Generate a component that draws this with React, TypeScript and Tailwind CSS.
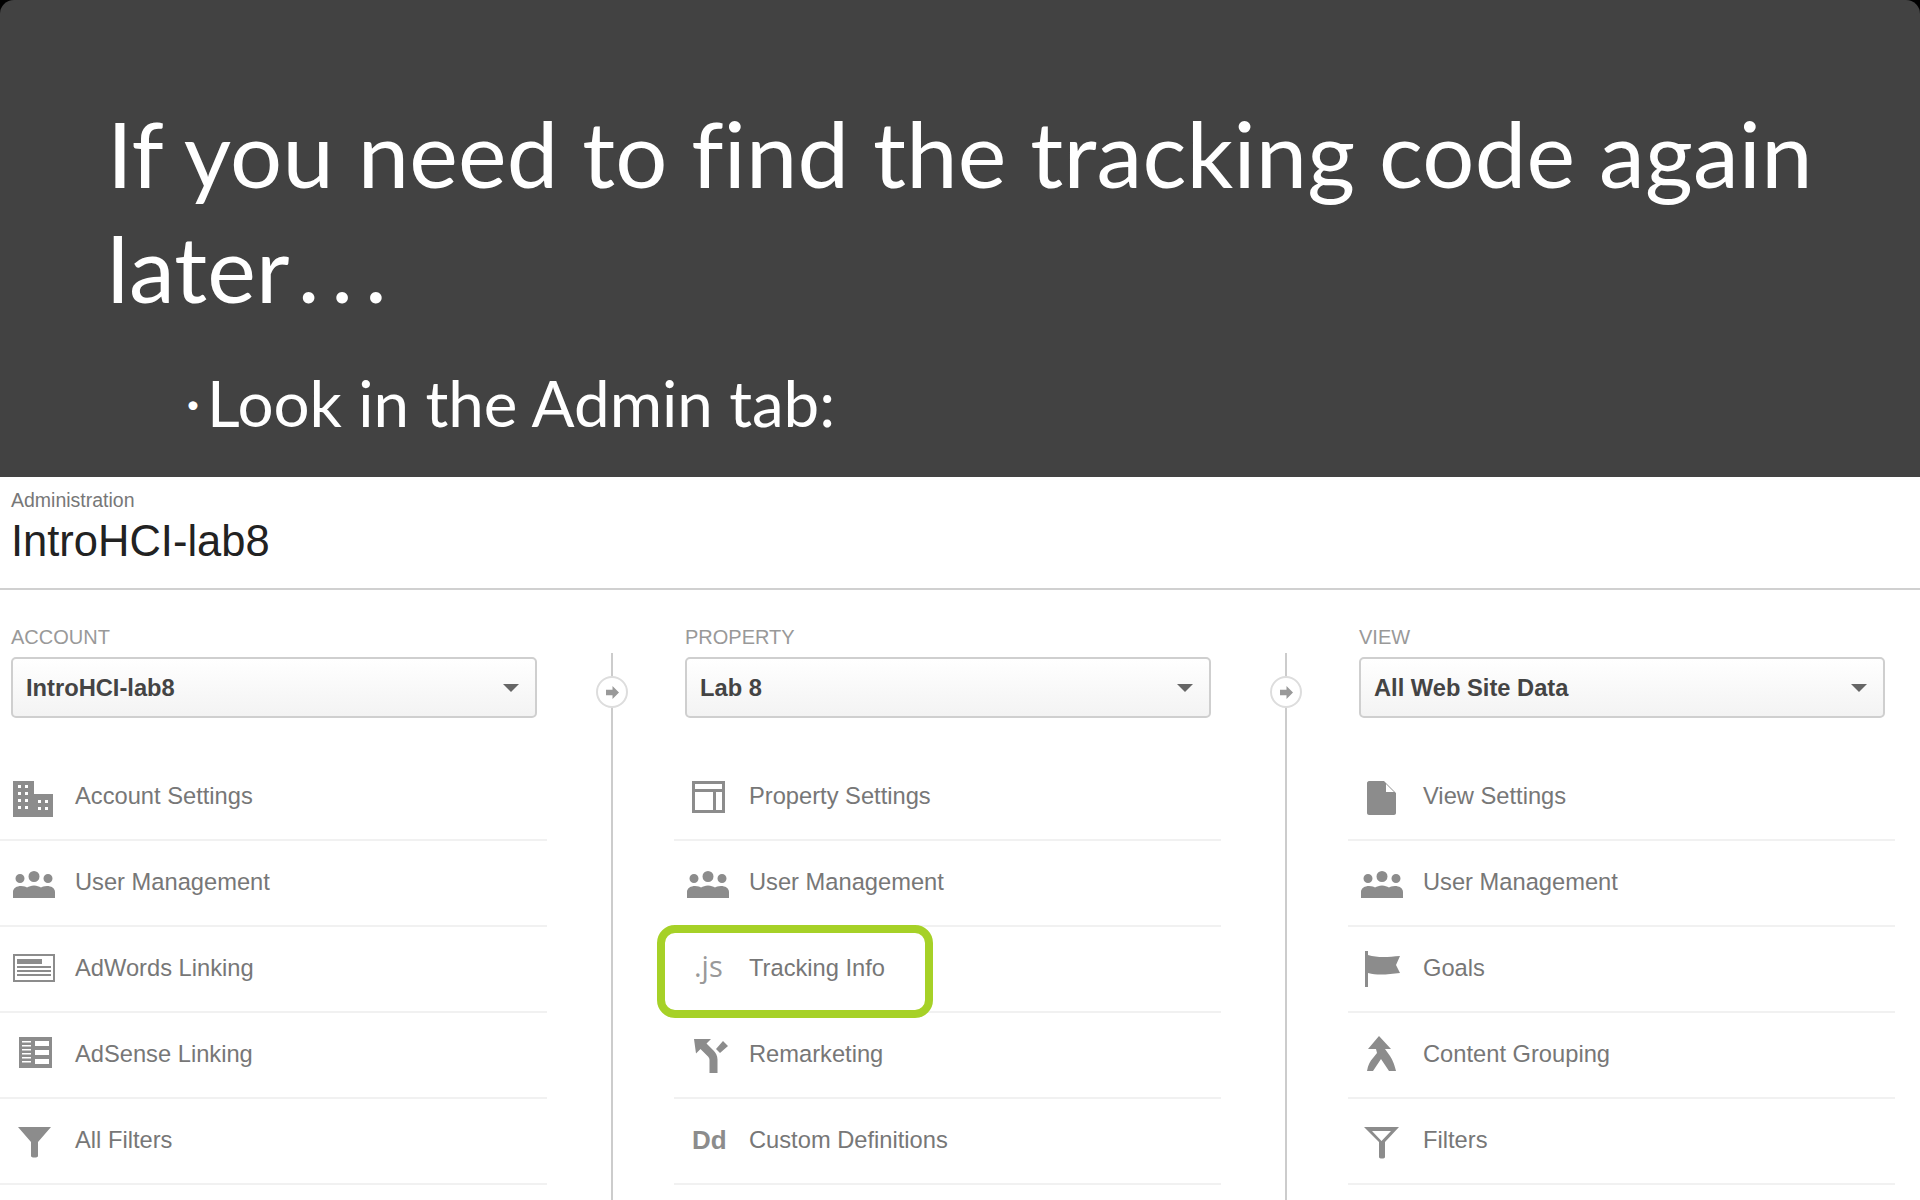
const TITLE_FONT = "font-['Lato',sans-serif]";

function Path({ d, className = '' }: { d: string; className?: string }) {
  return (
    <svg viewBox="0 0 44 44" className={`h-[44px] w-[44px] fill-[#8c8c8c] ${className}`}>
      <path d={d} fillRule="evenodd" />
    </svg>
  );
}

const BUILDING =
  'M2 4h21v13h19v23H2z M7 8v3h3V8z M14 8v3h3V8z M7 15v3h3v-3z M14 15v3h3v-3z M7 22v3h3v-3z M14 22v3h3v-3z M7 29v3h3v-3z M14 29v3h3v-3z M27 23v3h3v-3z M34 23v3h3v-3z M27 30v3h3v-3z M34 30v3h3v-3z';
const USERS =
  'M23 8a5.500 5.500 0 1 1 0 11a5.500 5.500 0 0 1 0-11z M9 11a4.500 4.500 0 1 1 0 9a4.500 4.500 0 0 1 0-9z M37 11a4.500 4.500 0 1 1 0 9a4.500 4.500 0 0 1 0-9z M2 35v-6c0-4 4-6 8-6c3 0 5 1 6 1.500c2-1 4-2 7-2s5 1 7 2c1-.5 3-1.500 6-1.500c4 0 8 2 8 6v6z';
const ADWORDS =
  'M2 5h42v28H2z M4 7v24h38V7z M6 10h25v5H6z M6 17h34v2H6z M6 21h34v2H6z M6 25h34v2H6z';
const ADSENSE =
  'M8 2h33v31H8z M11 6v1.500h9V6z M11 10v1.500h9V10z M11 14v1.500h9V14z M11 18v1.500h9V18z M11 22v1.500h9V22z M11 26v1.500h9V26z M24 6v5h14V6z M24 15v5h14v-5z M24 24v5h14v-5z';
const FUNNEL = 'M7 6h33L27 21v14c0 2-7 2-7 0V21z';
const FUNNEL_OPEN = 'M5 6h35L26 21v15c0 2-6 2-6 0V21z M13 10l9.500 10L32 10z';
const LAYOUT = 'M7 4h33v32H7z M10 7v5h27V7z M10 15v18h18V15z M31 15v18h6V15z';
const REMARKING =
  'M9 4h17l-4.500 4.500l7 7c2 2 4 5 4 9V38h-8V25c0-2-1-3-2-4l-7-7l-4.500 4.500z M31 14l7-8l5 5l-8 7z';
const PAGE = 'M10 4h15l12 12v20c0 1-1 2-2 2H10c-1 0-2-1-2-2V6c0-1 1-2 2-2z M27 7v8h8z';
const FLAG = 'M6 2h3v4c10 3 20 2 32 1l-4 9l4 8c-11 1-21 3-32 0v14H6z';
const MERGE =
  'M20 1l12 13h-6l5 7c2 3 4 7 6 15h-7l-8-12l-8 12H8c1-6 3-10 6-13l4-5l-1-4H9z';

function DdIcon() {
  return <span className="-mt-[5px] block w-[44px] pl-[7px] text-[26px] leading-none font-bold text-[#8c8c8c]">Dd</span>;
}

function JsIcon() {
  return (
    <span className="-mt-[11px] block w-[44px] pl-[9px] font-['Open_Sans',sans-serif] text-[29px] leading-none font-normal text-[#999999]">
      .js
    </span>
  );
}

function Row({ icon, label }: { icon: React.ReactNode; label: string }) {
  return (
    <div className="flex h-[86px] items-center border-b-2 border-[#f1f1f1] pb-[2px]">
      <div className="flex w-[64px] shrink-0 justify-center pt-[5px] pl-[2px]">{icon}</div>
      <span className="ml-[11px] pt-[2px] text-[23.7px] text-[#777777]">{label}</span>
    </div>
  );
}

function Column({
  title,
  selected,
  rows,
  connector,
}: {
  title: string;
  selected: string;
  rows: { icon: React.ReactNode; label: string }[];
  connector?: boolean;
}) {
  return (
    <div className="relative w-[547px] shrink-0">
      <div className="pl-[11px] text-[20px] leading-[24px] text-[#999999]">{title}</div>
      <div className="mt-[8px] ml-[11px] flex h-[61px] w-[526px] items-center justify-between rounded-[5px] border-2 border-[#cfcfcf] bg-gradient-to-b from-[#ffffff] to-[#f3f3f3] pr-[16px] pl-[13px]">
        <span className="pt-[2px] text-[23.7px] font-bold text-[#444444]">{selected}</span>
        <span className="h-0 w-0 border-x-[8px] border-t-[8px] border-x-transparent border-t-[#666666]" />
      </div>
      <div className="mt-[37px]">
        {rows.map((row) => (
          <Row key={row.label} icon={row.icon} label={row.label} />
        ))}
      </div>
      {connector && (
        <div className="absolute top-[28px] -right-[66px] bottom-[-200px] w-[2px] bg-[#cccccc]">
          <div className="absolute top-[23px] -left-[15px] flex h-[32px] w-[32px] items-center justify-center rounded-full border-2 border-[#dddddd] bg-white">
            <svg viewBox="0 0 16 14" className="h-[13px] w-[15px] fill-[#999999]">
              <path d="M1 4h7V0l7 7l-7 7v-4H1z" />
            </svg>
          </div>
        </div>
      )}
    </div>
  );
}

export default function App() {
  return (
    <div className="h-[1200px] w-[1920px] overflow-hidden bg-black font-['Liberation_Sans',sans-serif]">
      <div className={`h-[477px] rounded-t-[14px] bg-[#424242] pt-[95px] pl-[107px] text-white ${TITLE_FONT}`}>
        <h1 className="w-[1760px] text-[92px] leading-[115px] font-normal tracking-[0.2px]">
          <span className="block">If you need to find the tracking code again</span>
          <span className="block">
            later
            <span className="ml-[8px] tracking-[12px]">...</span>
          </span>
        </h1>
        <p className="mt-[42px] flex items-baseline pl-[79px] text-[63.7px] leading-[72px]">
          <span className="w-[21px] -translate-y-[14px] text-[24px] leading-none">•</span>
          <span>Look in the Admin tab:</span>
        </p>
      </div>
      <div className="relative h-[723px] bg-white">
        <div className="h-[113px] border-b-2 border-[#d0d0d0] pt-[12px] pl-[11px]">
          <div className="text-[19.5px] leading-[22px] text-[#777777]">Administration</div>
          <div className="mt-[5px] text-[43.5px] leading-[50px] text-[#222222]">IntroHCI-lab8</div>
        </div>
        <div className="mt-[35px] flex gap-[127px]">
          <Column
            title="ACCOUNT"
            selected="IntroHCI-lab8"
            connector
            rows={[
              { icon: <Path d={BUILDING} />, label: 'Account Settings' },
              { icon: <Path d={USERS} />, label: 'User Management' },
              { icon: <Path d={ADWORDS} />, label: 'AdWords Linking' },
              { icon: <Path d={ADSENSE} />, label: 'AdSense Linking' },
              { icon: <Path d={FUNNEL} />, label: 'All Filters' },
            ]}
          />
          <Column
            title="PROPERTY"
            selected="Lab 8"
            connector
            rows={[
              { icon: <Path d={LAYOUT} />, label: 'Property Settings' },
              { icon: <Path d={USERS} />, label: 'User Management' },
              { icon: <JsIcon />, label: 'Tracking Info' },
              { icon: <Path d={REMARKING} />, label: 'Remarketing' },
              { icon: <DdIcon />, label: 'Custom Definitions' },
            ]}
          />
          <Column
            title="VIEW"
            selected="All Web Site Data"
            rows={[
              { icon: <Path d={PAGE} />, label: 'View Settings' },
              { icon: <Path d={USERS} />, label: 'User Management' },
              { icon: <Path d={FLAG} />, label: 'Goals' },
              { icon: <Path d={MERGE} />, label: 'Content Grouping' },
              { icon: <Path d={FUNNEL_OPEN} />, label: 'Filters' },
            ]}
          />
        </div>
        <div className="absolute top-[448px] left-[657px] h-[93px] w-[276px] rounded-[18px] border-[8px] border-[#a6d127]" />
      </div>
    </div>
  );
}
